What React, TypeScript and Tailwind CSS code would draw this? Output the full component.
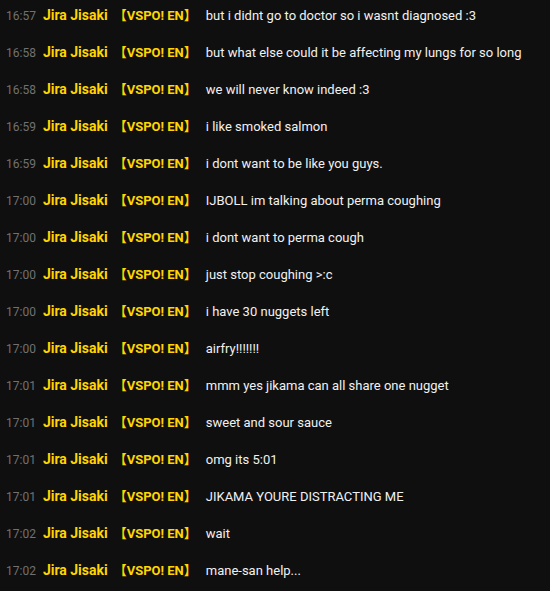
const messages: [string, string][] = [
  ["16:57", "but i didnt go to doctor so i wasnt diagnosed :3"],
  ["16:58", "but what else could it be affecting my lungs for so long"],
  ["16:58", "we will never know indeed :3"],
  ["16:59", "i like smoked salmon"],
  ["16:59", "i dont want to be like you guys."],
  ["17:00", "IJBOLL im talking about perma coughing"],
  ["17:00", "i dont want to perma cough"],
  ["17:00", "just stop coughing >:c"],
  ["17:00", "i have 30 nuggets left"],
  ["17:00", "airfry!!!!!!!"],
  ["17:01", "mmm yes jikama can all share one nugget"],
  ["17:01", "sweet and sour sauce"],
  ["17:01", "omg its 5:01"],
  ["17:01", "JIKAMA YOURE DISTRACTING ME"],
  ["17:02", "wait"],
  ["17:02", "mane-san help..."],
];

function ChatRow({ time, text }: { time: string; text: string }) {
  return (
    <div className="flex h-[37px] items-baseline whitespace-nowrap pl-[6px] pt-[4px] text-[13px] leading-[22px]">
      <span className="mr-[7px] text-[12px] text-[#717171]">{time}</span>
      <span className="text-[14px] font-bold text-[#ffd600]">Jira Jisaki</span>
      <span className="ml-[6px] font-bold text-[#ffd600]">【VSPO! EN】</span>
      <span className="ml-[9px] text-[#f1f1f1]">{text}</span>
    </div>
  );
}

export default function App() {
  return (
    <div
      className="h-[591px] w-[550px] overflow-hidden bg-[#0f0f0f]"
      style={{ fontFamily: "Roboto, 'Noto Sans CJK JP', sans-serif" }}
    >
      {messages.map(([time, text], i) => (
        <ChatRow key={i} time={time} text={text} />
      ))}
    </div>
  );
}
